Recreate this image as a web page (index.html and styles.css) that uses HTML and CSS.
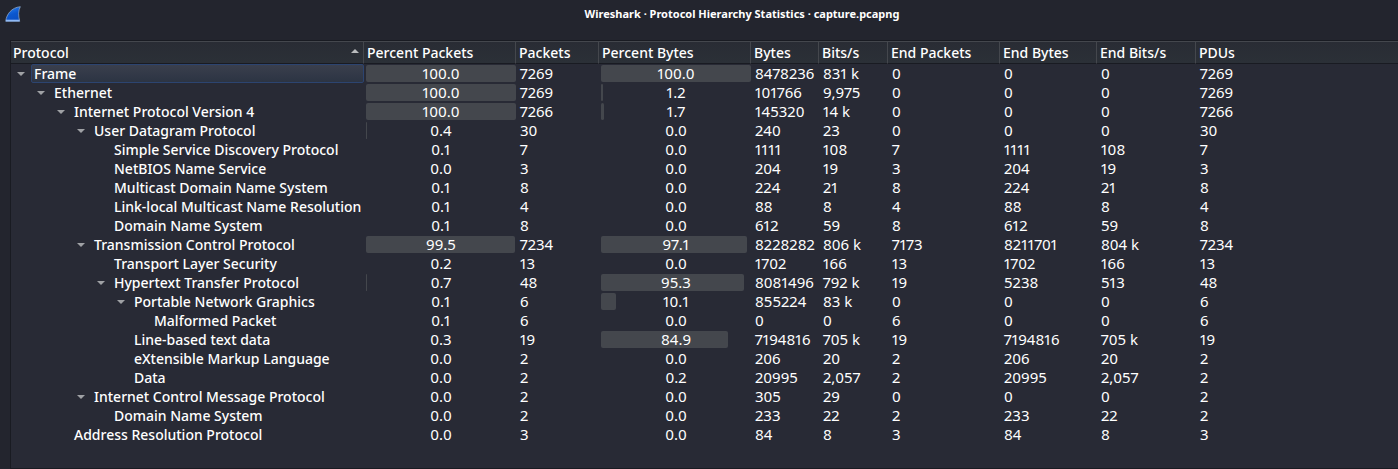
FILE: index.html
```html
<!DOCTYPE html>
<html lang="en">
<head>
<meta charset="utf-8">
<title>Wireshark · Protocol Hierarchy Statistics · capture.pcapng</title>
<link rel="stylesheet" href="styles.css">
</head>
<body>
<header class="titlebar">
<svg class="logo" viewBox="0 0 16 16" aria-hidden="true"><defs><linearGradient id="fin" x1="0" y1="0" x2="0.4" y2="1"><stop offset="0" stop-color="#2f86f2"/><stop offset="0.6" stop-color="#0b57cf"/><stop offset="1" stop-color="#0a4fc4"/></linearGradient></defs><path d="M0.7 15.3C1.6 8 6.500 1.600 15.300 0.700C13.200 4.500 13.200 9.500 14.700 15.300Z" fill="url(#fin)" stroke="#8ca4c6" stroke-width="0.8"/><path d="M1 14.500H14.500" stroke="#8fb9f5" stroke-width="1.600"/></svg>
<h1 class="title">Wireshark · Protocol Hierarchy Statistics · capture.pcapng</h1>
</header>
<main class="panel">
<table class="stats">
<colgroup><col class="c-protocol"><col class="c-percent"><col class="c-packets"><col class="c-percent"><col class="c-bytes"><col class="c-bits"><col class="c-endpackets"><col class="c-endbytes"><col class="c-endbits"><col></colgroup>
<thead>
<tr><th class="sorted"><button class="sort" type="button">Protocol<svg class="sort-arrow" viewBox="0 0 8 4" aria-hidden="true"><path d="M0 4L4 0L8 4Z"/></svg></button></th><th>Percent Packets</th><th>Packets</th><th>Percent Bytes</th><th>Bytes</th><th>Bits/s</th><th>End Packets</th><th>End Bytes</th><th>End Bits/s</th><th>PDUs</th></tr>
</thead>
<tbody>
<tr class="l0 selected"><td><div class="node"><button class="toggle" type="button" aria-label="Collapse Frame"></button><span class="name">Frame</span></div></td><td class="pct"><div class="bar" style="--v:100%">100.0</div></td><td>7269</td><td class="pct"><div class="bar" style="--v:100%">100.0</div></td><td>8478236</td><td>831 k</td><td>0</td><td>0</td><td>0</td><td>7269</td></tr>
<tr class="l1"><td><div class="node"><button class="toggle" type="button" aria-label="Collapse Ethernet"></button><span class="name">Ethernet</span></div></td><td class="pct"><div class="bar" style="--v:100%">100.0</div></td><td>7269</td><td class="pct"><div class="bar" style="--v:1.2%">1.2</div></td><td>101766</td><td>9,975</td><td>0</td><td>0</td><td>0</td><td>7269</td></tr>
<tr class="l2"><td><div class="node"><button class="toggle" type="button" aria-label="Collapse Internet Protocol Version 4"></button><span class="name">Internet Protocol Version 4</span></div></td><td class="pct"><div class="bar" style="--v:100%">100.0</div></td><td>7266</td><td class="pct"><div class="bar" style="--v:1.7%">1.7</div></td><td>145320</td><td>14 k</td><td>0</td><td>0</td><td>0</td><td>7266</td></tr>
<tr class="l3"><td><div class="node"><button class="toggle" type="button" aria-label="Collapse User Datagram Protocol"></button><span class="name">User Datagram Protocol</span></div></td><td class="pct"><div class="bar" style="--v:0.4%">0.4</div></td><td>30</td><td class="pct"><div class="bar">0.0</div></td><td>240</td><td>23</td><td>0</td><td>0</td><td>0</td><td>30</td></tr>
<tr class="l4"><td><div class="node"><span class="name">Simple Service Discovery Protocol</span></div></td><td class="pct"><div class="bar">0.1</div></td><td>7</td><td class="pct"><div class="bar">0.0</div></td><td>1111</td><td>108</td><td>7</td><td>1111</td><td>108</td><td>7</td></tr>
<tr class="l4"><td><div class="node"><span class="name">NetBIOS Name Service</span></div></td><td class="pct"><div class="bar">0.0</div></td><td>3</td><td class="pct"><div class="bar">0.0</div></td><td>204</td><td>19</td><td>3</td><td>204</td><td>19</td><td>3</td></tr>
<tr class="l4"><td><div class="node"><span class="name">Multicast Domain Name System</span></div></td><td class="pct"><div class="bar">0.1</div></td><td>8</td><td class="pct"><div class="bar">0.0</div></td><td>224</td><td>21</td><td>8</td><td>224</td><td>21</td><td>8</td></tr>
<tr class="l4"><td><div class="node"><span class="name">Link-local Multicast Name Resolution</span></div></td><td class="pct"><div class="bar">0.1</div></td><td>4</td><td class="pct"><div class="bar">0.0</div></td><td>88</td><td>8</td><td>4</td><td>88</td><td>8</td><td>4</td></tr>
<tr class="l4"><td><div class="node"><span class="name">Domain Name System</span></div></td><td class="pct"><div class="bar">0.1</div></td><td>8</td><td class="pct"><div class="bar">0.0</div></td><td>612</td><td>59</td><td>8</td><td>612</td><td>59</td><td>8</td></tr>
<tr class="l3"><td><div class="node"><button class="toggle" type="button" aria-label="Collapse Transmission Control Protocol"></button><span class="name">Transmission Control Protocol</span></div></td><td class="pct"><div class="bar" style="--v:99.5%">99.5</div></td><td>7234</td><td class="pct"><div class="bar" style="--v:97.1%">97.1</div></td><td>8228282</td><td>806 k</td><td>7173</td><td>8211701</td><td>804 k</td><td>7234</td></tr>
<tr class="l4"><td><div class="node"><span class="name">Transport Layer Security</span></div></td><td class="pct"><div class="bar">0.2</div></td><td>13</td><td class="pct"><div class="bar">0.0</div></td><td>1702</td><td>166</td><td>13</td><td>1702</td><td>166</td><td>13</td></tr>
<tr class="l4"><td><div class="node"><button class="toggle" type="button" aria-label="Collapse Hypertext Transfer Protocol"></button><span class="name">Hypertext Transfer Protocol</span></div></td><td class="pct"><div class="bar" style="--v:0.7%">0.7</div></td><td>48</td><td class="pct"><div class="bar" style="--v:95.3%">95.3</div></td><td>8081496</td><td>792 k</td><td>19</td><td>5238</td><td>513</td><td>48</td></tr>
<tr class="l5"><td><div class="node"><button class="toggle" type="button" aria-label="Collapse Portable Network Graphics"></button><span class="name">Portable Network Graphics</span></div></td><td class="pct"><div class="bar">0.1</div></td><td>6</td><td class="pct"><div class="bar" style="--v:10.1%">10.1</div></td><td>855224</td><td>83 k</td><td>0</td><td>0</td><td>0</td><td>6</td></tr>
<tr class="l6"><td><div class="node"><span class="name">Malformed Packet</span></div></td><td class="pct"><div class="bar">0.1</div></td><td>6</td><td class="pct"><div class="bar">0.0</div></td><td>0</td><td>0</td><td>6</td><td>0</td><td>0</td><td>6</td></tr>
<tr class="l5"><td><div class="node"><span class="name">Line-based text data</span></div></td><td class="pct"><div class="bar">0.3</div></td><td>19</td><td class="pct"><div class="bar" style="--v:84.9%">84.9</div></td><td>7194816</td><td>705 k</td><td>19</td><td>7194816</td><td>705 k</td><td>19</td></tr>
<tr class="l5"><td><div class="node"><span class="name">eXtensible Markup Language</span></div></td><td class="pct"><div class="bar">0.0</div></td><td>2</td><td class="pct"><div class="bar">0.0</div></td><td>206</td><td>20</td><td>2</td><td>206</td><td>20</td><td>2</td></tr>
<tr class="l5"><td><div class="node"><span class="name">Data</span></div></td><td class="pct"><div class="bar">0.0</div></td><td>2</td><td class="pct"><div class="bar">0.2</div></td><td>20995</td><td>2,057</td><td>2</td><td>20995</td><td>2,057</td><td>2</td></tr>
<tr class="l3"><td><div class="node"><button class="toggle" type="button" aria-label="Collapse Internet Control Message Protocol"></button><span class="name">Internet Control Message Protocol</span></div></td><td class="pct"><div class="bar">0.0</div></td><td>2</td><td class="pct"><div class="bar">0.0</div></td><td>305</td><td>29</td><td>0</td><td>0</td><td>0</td><td>2</td></tr>
<tr class="l4"><td><div class="node"><span class="name">Domain Name System</span></div></td><td class="pct"><div class="bar">0.0</div></td><td>2</td><td class="pct"><div class="bar">0.0</div></td><td>233</td><td>22</td><td>2</td><td>233</td><td>22</td><td>2</td></tr>
<tr class="l2"><td><div class="node"><span class="name">Address Resolution Protocol</span></div></td><td class="pct"><div class="bar">0.0</div></td><td>3</td><td class="pct"><div class="bar">0.0</div></td><td>84</td><td>8</td><td>3</td><td>84</td><td>8</td><td>3</td></tr>
</tbody>
</table>
</main>
</body>
</html>
```
FILE: styles.css
```css
* { box-sizing: border-box; }

body {
  margin: 0;
  min-height: 100vh;
  display: flex;
  flex-direction: column;
  background: #23252e;
  color: #fff;
  font: 15px/19px "Noto Sans", sans-serif;
  font-variant-numeric: proportional-nums;
}

button {
  border: 0;
  padding: 0;
  background: none;
  color: inherit;
  font: inherit;
}

.titlebar {
  display: grid;
  grid-template-columns: 81px 1fr;
  align-items: center;
  height: 28px;
  margin-bottom: 12px;
  padding-left: 5px;
}

.logo { width: 16px; height: 16px; }

.title {
  margin: 0;
  font-size: 11px;
  line-height: 20px;
  font-weight: 700;
  text-align: center;
}

.panel {
  flex: 1;
  margin-left: 10px;
  border: 1px solid #191b22;
  border-right: 0;
  background: #282a35;
}

.stats {
  width: 100%;
  table-layout: fixed;
  border-collapse: separate;
  border-spacing: 0;
}

.c-protocol { width: 353px; }
.c-percent { width: 152px; }
.c-packets { width: 83px; }
.c-bytes { width: 68px; }
.c-bits { width: 69px; }
.c-endpackets { width: 112px; }
.c-endbytes { width: 97px; }
.c-endbits { width: 99px; }

th {
  height: 23px;
  padding: 0 0 0 3px;
  border-top: 1px solid #44474d;
  border-right: 1px solid #44474d;
  border-bottom: 1px solid #191b22;
  background: linear-gradient(#292c34, #2b3037);
  font-size: 14px;
  font-weight: 500;
  text-align: left;
  white-space: nowrap;
}

th:last-child { border-right: 0; }

th.sorted { padding-left: 2px; }

.sort {
  display: flex;
  justify-content: space-between;
  width: 100%;
  padding-right: 4px;
}

.sort-arrow { width: 8px; height: 4px; margin-top: 6px; fill: #b9bbbd; }

td {
  height: 19px;
  padding: 0 0 0 4px;
  white-space: nowrap;
}

td:first-child { padding: 0; }

.node { display: flex; align-items: center; }

.name {
  flex: 1;
  height: 19px;
  padding-left: 2px;
  border: 1px solid transparent;
  font-size: 14px;
  font-weight: 500;
  line-height: 17px;
}

.selected .name {
  border-color: #2c4470;
  border-radius: 2px;
  background: linear-gradient(#3a3f4d, #2c3443);
}

.toggle {
  flex: none;
  display: flex;
  justify-content: center;
  width: 20px;
  height: 19px;
  align-items: center;
}

.toggle::before {
  content: "";
  border: 4px solid transparent;
  border-top-color: #9fa1a5;
  border-bottom: 0;
}

.l1 .node { padding-left: 20px; }
.l2 .node { padding-left: 40px; }
.l3 .node { padding-left: 60px; }
.l4 .node { padding-left: 80px; }
.l5 .node { padding-left: 100px; }
.l6 .node { padding-left: 120px; }

.name:only-child { margin-left: 20px; }

td.pct { padding: 1px 0 1px 2px; }

.bar {
  position: relative;
  z-index: 0;
  height: 17px;
  line-height: 17px;
  text-align: center;
}

.bar::before {
  content: "";
  position: absolute;
  z-index: -1;
  top: 0;
  bottom: 0;
  left: 0;
  width: var(--v, 0);
  border-radius: 2px;
  background: #44474d;
}
```
